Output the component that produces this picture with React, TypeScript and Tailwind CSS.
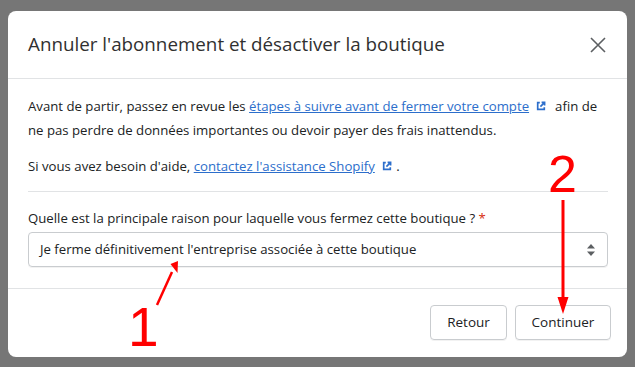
import React from "react";

const ExtIcon = () => (
  <svg width="12" height="12" viewBox="0 0 20 20" className="inline-block align-[-1px] ml-[6px]" fill="none" stroke="#2c6ecb" strokeWidth="2.8">
    <path d="M8 4.5H4.5v11h11V12" />
    <path d="M11 4h5v5M16 4l-7 7" />
  </svg>
);

export default function App() {
  return (
    <div
      className="relative w-[635px] h-[367px] bg-[#767676] overflow-hidden pt-[11px] pl-[8px]"
      style={{ fontFamily: '"Open Sans", "Noto Sans", sans-serif' }}
    >
      <div className="w-[619px] h-[346px] bg-white rounded-[8px] flex flex-col text-[#202223]">
        <div className="h-[68px] flex items-center justify-between pl-[20px] pr-[21px] border-b border-[#e1e3e5]">
          <div className="text-[18.8px] text-[#303030]">Annuler l'abonnement et désactiver la boutique</div>
          <svg width="16" height="16" viewBox="0 0 16 16" stroke="#5c5f62" strokeWidth="1.6">
            <path d="M1 1L15 15M15 1L1 15" />
          </svg>
        </div>
        <div className="pl-[20px] pr-[19px] pt-[15px] pb-[21px] border-b border-[#e1e3e5] text-[13.2px]">
          <p className="leading-[24px]">
            Avant de partir, passez en revue les{" "}
            <span className="text-[#2c6ecb] underline">étapes à suivre avant de fermer votre compte</span>
            <ExtIcon />
            <span className="ml-[8px]">afin de</span>
            <br />
            ne pas perdre de données importantes ou devoir payer des frais inattendus.
          </p>
          <p className="leading-[24px] mt-[12px]">
            Si vous avez besoin d'aide,{" "}
            <span className="text-[#2c6ecb] underline">contactez l'assistance Shopify</span>
            <ExtIcon /> .
          </p>
          <div className="h-px bg-[#e1e3e5] mt-[13px]" />
          <div className="leading-[20px] mt-[16px]">
            Quelle est la principale raison pour laquelle vous fermez cette boutique ?{" "}
            <span className="text-[#d72c0d]">*</span>
          </div>
          <div className="mt-[4px] h-[35px] border border-[#c9cccf] rounded-[4px] flex items-center justify-between pl-[11px] pr-[12px] shadow-[0_1px_0_rgba(0,0,0,0.05)]">
            <span>Je ferme définitivement l'entreprise associée à cette boutique</span>
            <svg width="8" height="12" viewBox="0 0 8 12" fill="#5c5f62">
              <path d="M4 0L8 4.5H0Z" />
              <path d="M4 12L8 7.5H0Z" />
            </svg>
          </div>
        </div>
        <div className="flex justify-end gap-[8px] pt-[16px] pr-[16px]">
          <button className="w-[77px] h-[35px] border border-[#c9cccf] rounded-[4px] text-[13.5px] font-medium text-[#202223] shadow-[0_1px_0_rgba(0,0,0,0.05)]">
            Retour
          </button>
          <button className="w-[96px] h-[35px] border border-[#c9cccf] rounded-[4px] text-[13.5px] font-medium text-[#202223] shadow-[0_1px_0_rgba(0,0,0,0.05)]">
            Continuer
          </button>
        </div>
      </div>

      <div
        className="absolute left-[548px] top-[146px] text-[52px] leading-[56px] text-[#ff0000]"
        style={{ fontFamily: '"Liberation Sans", Arial, sans-serif' }}
      >
        2
      </div>
      <div
        className="absolute left-[128px] top-[298px] text-[55px] leading-[58px] text-[#ff0000]"
        style={{ fontFamily: '"Liberation Sans", Arial, sans-serif' }}
      >
        1
      </div>
      <svg className="absolute left-0 top-0" width="635" height="367" viewBox="0 0 635 367">
        <line x1="563" y1="200" x2="563" y2="300" stroke="#ff0000" strokeWidth="3" />
        <path d="M557.5 297 L568.5 297 L563 314 Z" fill="#ff0000" />
        <line x1="157" y1="305" x2="172" y2="272" stroke="#ff0000" strokeWidth="2.5" />
        <path d="M170.5 264 L178 261 L177.5 273 Z" fill="#ff0000" />
      </svg>
    </div>
  );
}
